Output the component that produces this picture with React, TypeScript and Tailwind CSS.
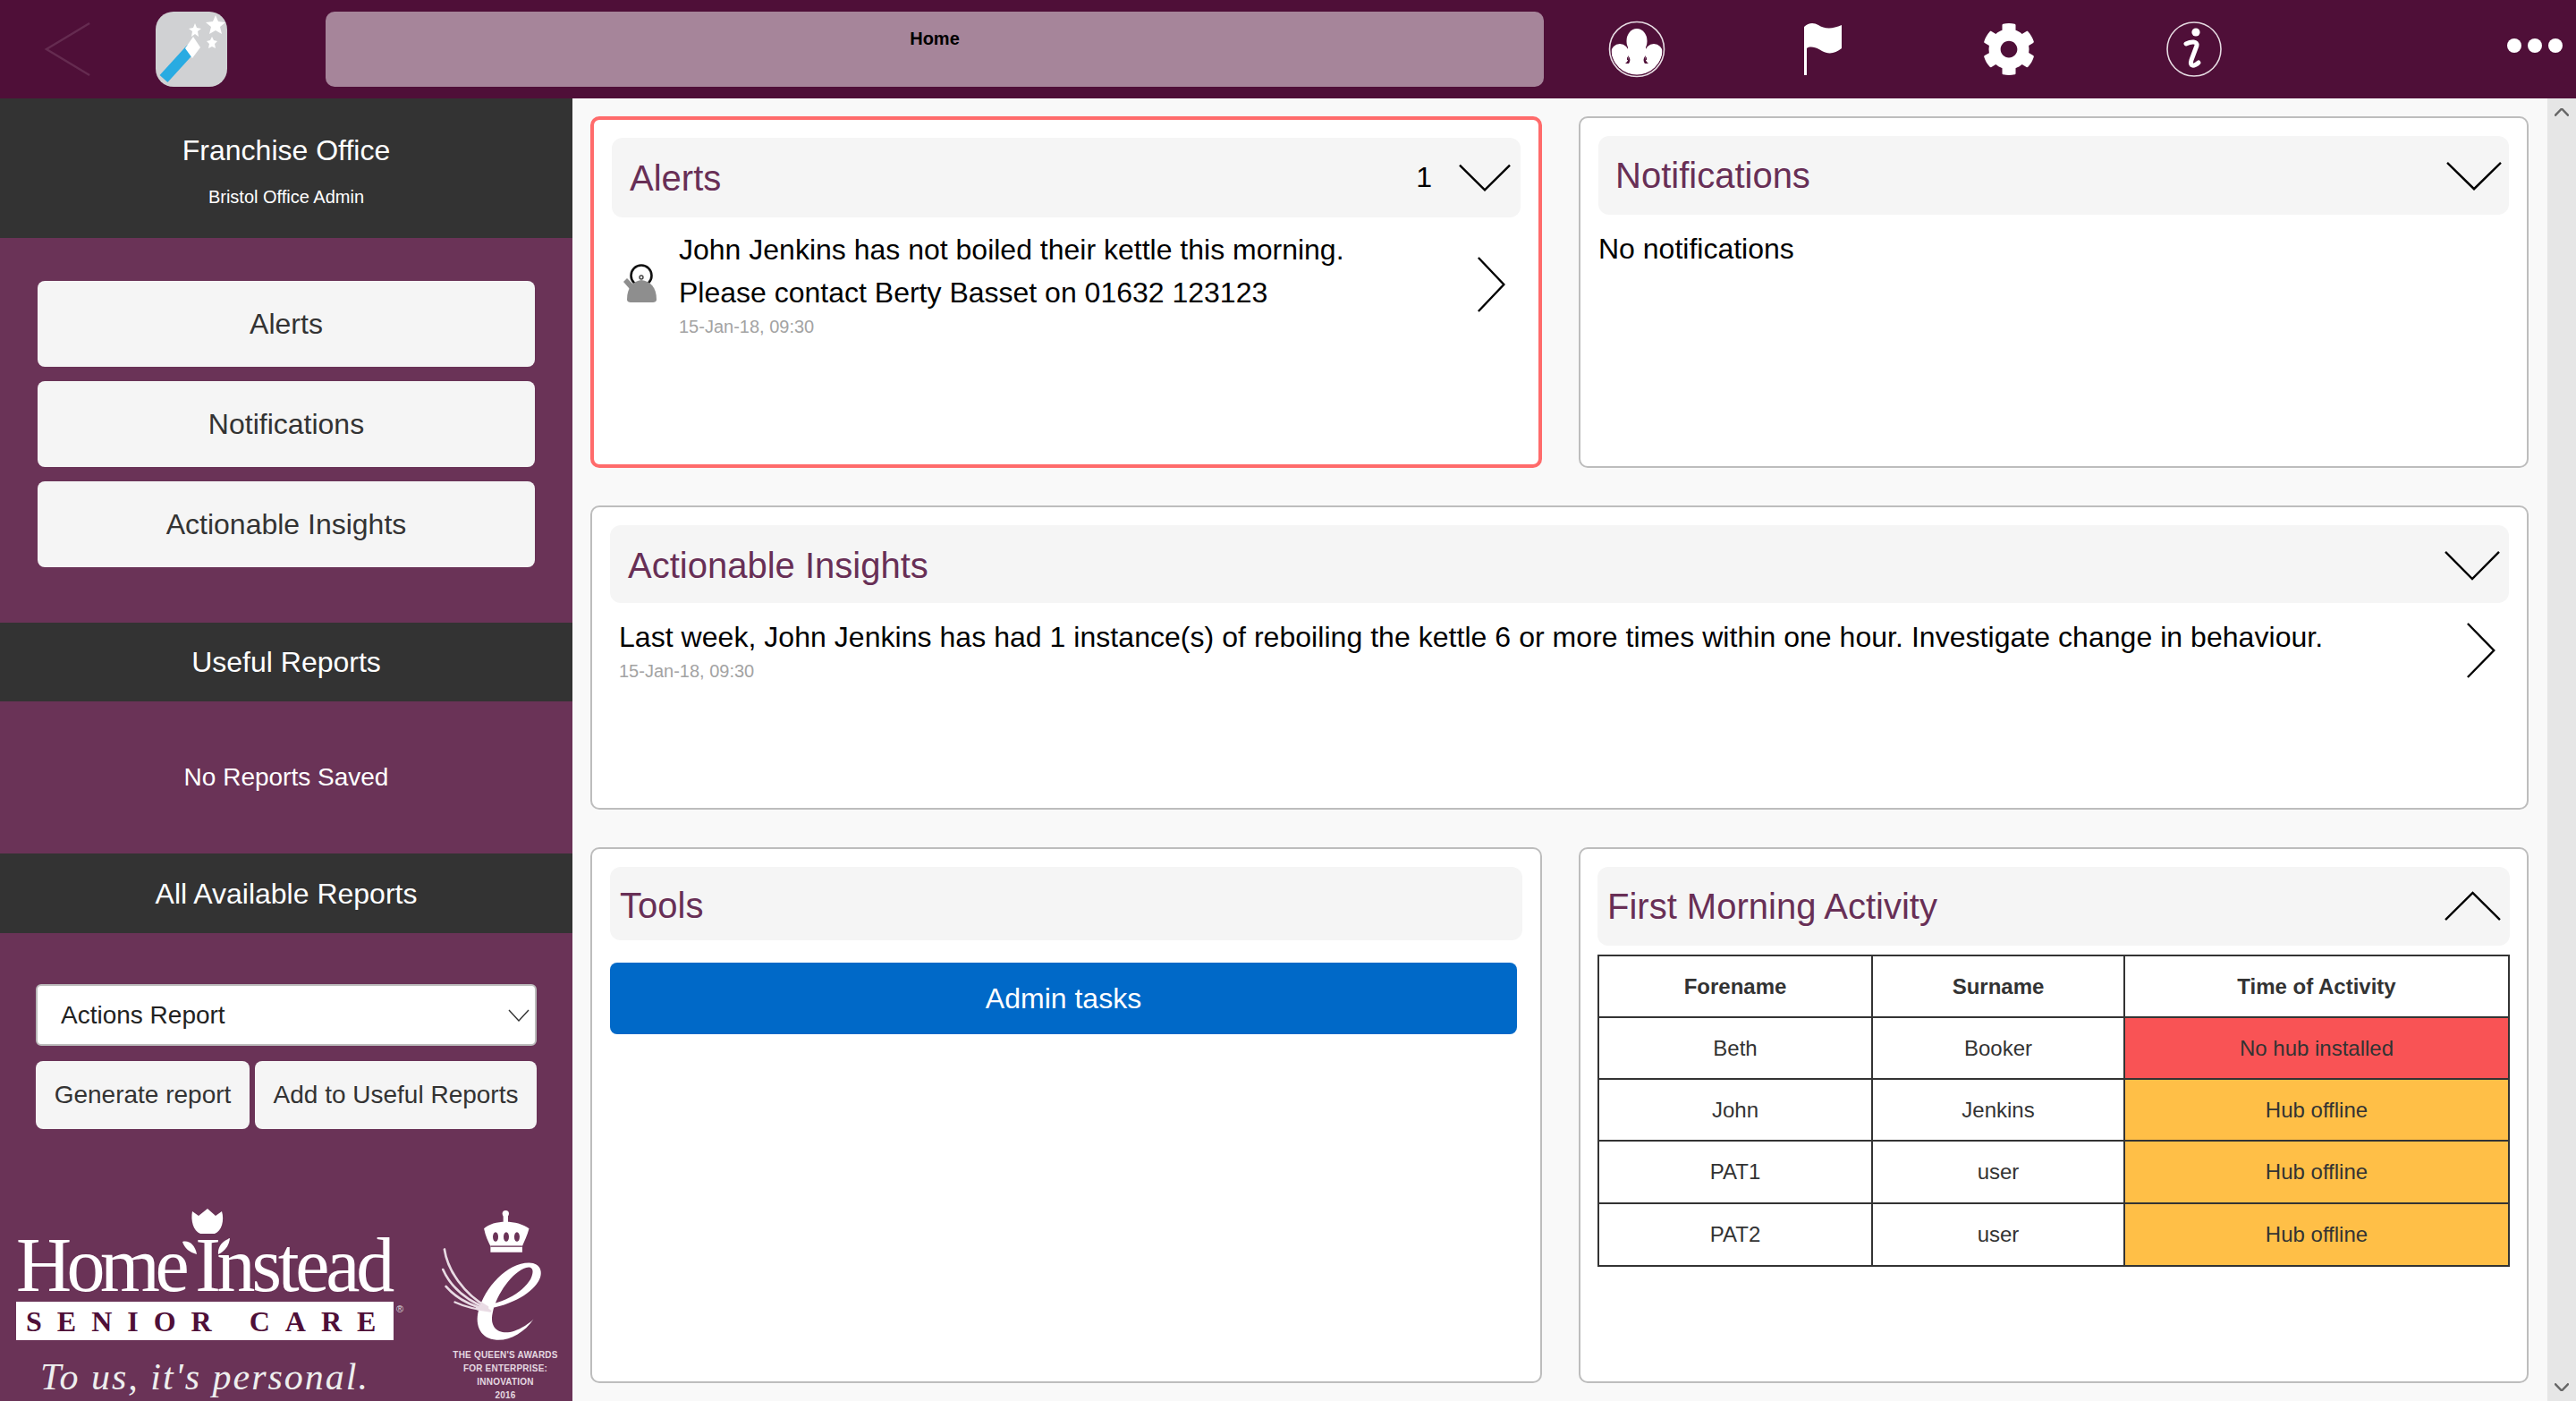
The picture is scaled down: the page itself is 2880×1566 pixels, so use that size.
import { FaCog } from "react-icons/fa";

const rows = [
  { forename: "John", surname: "Jenkins", status: "Hub offline", tone: "bg-[#ffbf47]", height: "h-[69px]" },
  { forename: "PAT1", surname: "user", status: "Hub offline", tone: "bg-[#ffbf47]", height: "h-[70px]" },
  { forename: "PAT2", surname: "user", status: "Hub offline", tone: "bg-[#ffbf47]", height: "h-[70px]" },
];

function Chevron({ dir, className }: { dir: "up" | "down" | "left" | "right"; className: string }) {
  const d = {
    up: "M1 35 L30 2 L59 35",
    down: "M1 2 L30 35 L59 2",
    left: "M35 1 L2 30 L35 59",
    right: "M2 1 L33 30 L2 59",
  }[dir];
  const box = dir === "up" || dir === "down" ? "0 0 60 37" : "0 0 37 60";
  return (
    <svg viewBox={box} className={className} preserveAspectRatio="none" fill="none">
      <path d={d} stroke="currentColor" strokeWidth="2.4" vectorEffect="non-scaling-stroke" />
    </svg>
  );
}

function Wand() {
  return (
    <div className="ml-[71px] h-[84px] w-[80px] shrink-0 rounded-[20px] bg-[#d0d1d3]">
      <svg viewBox="0 0 80 84" className="h-full w-full">
        <path d="M9 75 L40 41" stroke="#29abe2" strokeWidth="12" />
        <path d="M42 28 L50 40 L41 52 L33 41 Z" fill="#fff" />
        <path d="M67 4 L70 11 L78 12 L72 17 L74 25 L67 21 L60 25 L62 17 L56 12 L64 11 Z" fill="#fff" />
        <path d="M44 13 L46 18 L51 19 L47 22 L48 28 L44 25 L40 28 L41 22 L37 19 L42 18 Z" fill="#fff" />
        <path d="M63 28 L65 32 L69 33 L66 36 L67 41 L63 39 L59 41 L60 36 L57 33 L61 32 Z" fill="#fff" />
      </svg>
    </div>
  );
}

function PeopleIcon() {
  return (
    <svg viewBox="0 0 64 64" className="ml-[72px] h-[64px] w-[64px] shrink-0">
      <defs>
        <clipPath id="people-clip">
          <circle cx="32" cy="32" r="28.5" />
        </clipPath>
      </defs>
      <circle cx="32" cy="32" r="30.5" fill="none" stroke="#e6dbe2" strokeWidth="1.6" />
      <g clipPath="url(#people-clip)" fill="#fff">
        <ellipse cx="32" cy="23" rx="11.5" ry="14" />
        <circle cx="13" cy="36" r="10" />
        <circle cx="51" cy="36" r="10" />
        <rect x="0" y="44" width="64" height="20" />
        <rect x="22" y="28" width="20" height="20" />
        <rect x="4" y="38" width="17" height="10" />
        <rect x="43" y="38" width="17" height="10" />
      </g>
      <path d="M22 39 C23 43 22 46 19 48 L23 48 C25 45 25 42 22 39 Z" fill="#4f0f38" />
      <path d="M42 39 C41 43 42 46 45 48 L41 48 C39 45 39 42 42 39 Z" fill="#4f0f38" />
    </svg>
  );
}

function FlagIcon() {
  return (
    <svg viewBox="0 0 42 60" className="ml-[155px] h-[60px] w-[42px] shrink-0">
      <path
        d="M0 5 C5 0 11 0 16 3 C22 7 31 8 42 3 L42 29 C35 35 27 36 20 32 C14 28 7 26 3 29 L3 59 L0 59 Z"
        fill="#fff"
      />
    </svg>
  );
}

function InfoIcon() {
  return (
    <svg viewBox="0 0 62 62" className="ml-[146px] h-[62px] w-[62px] shrink-0">
      <circle cx="31" cy="31" r="30" fill="none" stroke="#e6dbe2" strokeWidth="1.6" />
      <circle cx="33" cy="12" r="4.6" fill="#fff" />
      <path
        d="M22 25 C28 22 35 22 34 27 L28 43 C26 50 30 51 36 46"
        fill="none"
        stroke="#fff"
        strokeWidth="5"
        strokeLinecap="round"
      />
    </svg>
  );
}

function KettleIcon() {
  return (
    <svg viewBox="0 0 40 44" className="h-[44px] w-[40px] shrink-0">
      <circle cx="21" cy="13" r="11.5" fill="none" stroke="#111" strokeWidth="2.6" />
      <circle cx="21" cy="15" r="2" fill="none" stroke="#444" strokeWidth="1.4" />
      <path d="M1 20 L5 16 L12 23 L8 28 Z" fill="#8e8e8e" />
      <path
        d="M5 40 C5 26 12 19 21 18 C31 19 38 26 38 40 C38 42 36 43 34 43 L9 43 C7 43 5 42 5 40 Z"
        fill="#8e8e8e"
      />
    </svg>
  );
}

function HomeInsteadLogo() {
  return (
    <div className="relative w-[470px] shrink-0 pl-[18px] pt-[26px]">
      <svg viewBox="0 0 60 54" className="absolute left-[202px] top-0 h-[54px] w-[60px]">
        <path
          d="M13 4 L20 9 L30 1 L39 9 L46 4 C49 14 46 26 38 29 L22 29 C14 26 11 14 13 4 Z"
          fill="#fff"
        />
        <path d="M2 38 C9 36 16 41 18 52 C10 50 4 45 2 38 Z" fill="#fff" />
        <path d="M55 34 C54 43 49 49 42 52 C41 43 47 37 55 34 Z" fill="#fff" />
      </svg>
      <div className="flex h-[76px] items-end font-['Liberation_Serif',serif] text-[86px] leading-[76px] text-white">
        <span className="tracking-[-5.5px]">Home</span>
        <span className="ml-[12px] tracking-[-4.2px]">Instead</span>
      </div>
      <div className="mt-[3px] flex h-[43px] w-[422px] items-center bg-white pl-[11px] font-['Liberation_Serif',serif] text-[32px] font-bold tracking-[17px] whitespace-pre text-[#4f0f38]">
        <span className="-mr-[17px]">SENIOR CARE</span>
      </div>
      <span className="absolute left-[443px] top-[108px] font-['Liberation_Sans',sans-serif] text-[11px] leading-none text-[#ddd]">
        ®
      </span>
      <div className="ml-[27px] mt-[19px] font-['Liberation_Serif',serif] text-[42px] leading-[44px] tracking-[2px] text-[#eee] italic">
        To us, it's personal.
      </div>
    </div>
  );
}

function QueensAward() {
  return (
    <div className="flex w-[160px] shrink-0 flex-col items-center">
      <svg viewBox="0 0 480 500" className="h-[166px] w-[160px]">
        <g fill="#fff">
          <circle cx="256" cy="50" r="11" />
          <rect x="248" y="55" width="16" height="30" />
          <path d="M183 100 C215 70 295 70 335 100 C328 125 318 145 312 160 L312 180 L205 180 L205 160 C198 145 188 125 183 100 Z" />
        </g>
        <g fill="#6a3357">
          <ellipse cx="222" cy="128" rx="9" ry="16" />
          <ellipse cx="258" cy="128" rx="9" ry="16" />
          <ellipse cx="294" cy="128" rx="9" ry="16" />
          <rect x="205" y="158" width="107" height="4" />
        </g>
        <path
          d="M350 405 C320 450 270 478 225 475 C175 472 150 430 165 375 C185 300 260 215 335 215 C375 215 385 250 365 280 C340 320 270 365 160 375 L155 365 C240 355 310 320 340 270 C355 240 345 225 325 232 C280 245 225 320 212 385 C200 440 240 460 285 445 C310 436 335 420 350 405 Z"
          fill="#fff"
        />
        <g fill="none" stroke="#e9dbe4" strokeLinecap="round">
          <path d="M50 170 C60 240 115 320 195 365" strokeWidth="8" />
          <path d="M45 238 C70 295 120 340 195 370" strokeWidth="8" />
          <path d="M55 295 C85 330 135 360 200 375" strokeWidth="8" />
          <path d="M85 348 C115 362 150 372 205 378" strokeWidth="7" />
        </g>
      </svg>
      <div className="ml-[10px] mt-[1px] whitespace-nowrap text-center text-[10px] font-bold leading-[15px] tracking-[0.2px] text-[#e4d8e0]">
        <div>THE QUEEN'S AWARDS</div>
        <div>FOR ENTERPRISE:</div>
        <div>INNOVATION</div>
        <div>2016</div>
      </div>
    </div>
  );
}

function SideButton({ label }: { label: string }) {
  return (
    <button className="h-[96px] w-[556px] rounded-[8px] bg-[#f5f5f5] text-[32px] text-[#333]">{label}</button>
  );
}

function Sidebar() {
  return (
    <aside className="h-[1456px] w-[640px] shrink-0 overflow-hidden bg-[#6a3357] text-white">
      <div className="h-[156px] bg-[#333] pt-[40px] text-center">
        <div className="text-[32px] leading-[36px]">Franchise Office</div>
        <div className="mt-[20px] text-[20px] leading-[28px]">Bristol Office Admin</div>
      </div>
      <div className="flex flex-col gap-[16px] pl-[42px] pt-[48px]">
        <SideButton label="Alerts" />
        <SideButton label="Notifications" />
        <SideButton label="Actionable Insights" />
      </div>
      <div className="mt-[62px] flex h-[88px] items-center justify-center bg-[#333] text-[32px]">Useful Reports</div>
      <div className="flex h-[170px] items-center justify-center text-[28px]">No Reports Saved</div>
      <div className="flex h-[89px] items-center justify-center bg-[#333] text-[32px]">All Available Reports</div>
      <div className="pl-[40px] pt-[57px]">
        <div className="relative h-[69px] w-[560px]">
          <select className="h-full w-full appearance-none rounded-[6px] border-2 border-[#bbb] bg-white pl-[26px] text-[28px] text-[#222]">
            <option>Actions Report</option>
          </select>
          <svg viewBox="0 0 24 14" className="pointer-events-none absolute right-[8px] top-[28px] h-[14px] w-[24px]" fill="none">
            <path d="M1 1 L12 13 L23 1" stroke="#333" strokeWidth="1.4" />
          </svg>
        </div>
        <div className="mt-[17px] flex gap-[6px]">
          <button className="h-[76px] w-[239px] rounded-[8px] bg-[#f5f5f5] text-[28px] text-[#333]">Generate report</button>
          <button className="h-[76px] w-[315px] rounded-[8px] bg-[#f5f5f5] text-[28px] text-[#333]">Add to Useful Reports</button>
        </div>
      </div>
      <div className="mt-[88px] flex">
        <HomeInsteadLogo />
        <div className="ml-[10px] -mt-[10px]">
          <QueensAward />
        </div>
      </div>
    </aside>
  );
}

function Card({ alert, className, children }: { alert?: boolean; className?: string; children: React.ReactNode }) {
  return (
    <section
      className={`rounded-[10px] bg-white ${alert ? "border-4 border-[#ff6b6b]" : "border-2 border-[#bdbdbd]"} ${className ?? "p-[20px]"}`}
    >
      {children}
    </section>
  );
}

function CardHeader({ title, height, inset, children }: { title: string; height: string; inset: string; children?: React.ReactNode }) {
  return (
    <div className={`flex items-center justify-between rounded-[12px] bg-[#f5f5f5] ${height} ${inset}`}>
      <h2 className="text-[40px] font-normal text-[#682f56]">{title}</h2>
      {children}
    </div>
  );
}

function ActivityTable() {
  return (
    <table className="mt-[10px] w-full table-fixed border-collapse border-2 border-[#333] text-center text-[24px] text-[#333]">
      <colgroup>
        <col className="w-[306px]" />
        <col className="w-[282px]" />
        <col />
      </colgroup>
      <thead>
        <tr className="h-[69px]">
          <th className="border-2 border-[#333] font-bold">Forename</th>
          <th className="border-2 border-[#333] font-bold">Surname</th>
          <th className="border-2 border-[#333] font-bold">Time of Activity</th>
        </tr>
      </thead>
      <tbody>
        <tr className="h-[69px]">
          <td className="border-2 border-[#333]">Beth</td>
          <td className="border-2 border-[#333]">Booker</td>
          <td className="border-2 border-[#333] bg-[#f95355]">No hub installed</td>
        </tr>
        {rows.map((row) => (
          <tr key={row.forename} className={row.height}>
            <td className="border-2 border-[#333]">{row.forename}</td>
            <td className="border-2 border-[#333]">{row.surname}</td>
            <td className={`border-2 border-[#333] ${row.tone}`}>{row.status}</td>
          </tr>
        ))}
      </tbody>
    </table>
  );
}

function Scrollbar() {
  return (
    <div className="flex h-[1456px] w-[32px] shrink-0 flex-col items-center justify-between bg-[#e6e6e6] py-[11px] text-[#666]">
      <Chevron dir="up" className="h-[9px] w-[16px]" />
      <Chevron dir="down" className="h-[9px] w-[16px]" />
    </div>
  );
}

export default function App() {
  return (
    <div className="h-[1566px] w-[2880px] overflow-hidden bg-[#f9f9f9] font-['Liberation_Sans',sans-serif]">
      <header className="flex h-[110px] items-center bg-[#4f0f38]">
        <Chevron dir="left" className="ml-[49px] h-[60px] w-[54px] shrink-0 text-[#652b50]" />
        <Wand />
        <div className="ml-[110px] flex h-[84px] w-[1362px] shrink-0 justify-center rounded-[10px] bg-[#a6859a] pt-[18px] text-[20px] font-bold leading-[24px] text-black">
          Home
        </div>
        <PeopleIcon />
        <FlagIcon />
        <FaCog className="ml-[157px] h-[60px] w-[60px] shrink-0 text-white" />
        <InfoIcon />
        <div className="ml-[319px] flex gap-[7px] pb-[8px]">
          <span className="h-[16px] w-[16px] rounded-full bg-white" />
          <span className="h-[16px] w-[16px] rounded-full bg-white" />
          <span className="h-[16px] w-[16px] rounded-full bg-white" />
        </div>
      </header>
      <div className="flex">
        <Sidebar />
        <main className="grid h-[1456px] w-[2208px] grid-cols-[1064px_1062px] grid-rows-[393px_340px_599px] gap-x-[41px] gap-y-[42px] pl-[20px] pt-[20px]">
          <Card alert>
            <CardHeader title="Alerts" height="h-[89px]" inset="pl-[20px] pr-[11px]">
              <div className="flex items-center gap-[30px] text-[32px]">
                <span className="-mt-[2px]">1</span>
                <Chevron dir="down" className="h-[31px] w-[58px]" />
              </div>
            </CardHeader>
            <div className="mt-[12px] flex items-center pl-[12px] pr-[15px]">
              <KettleIcon />
              <div className="ml-[23px] flex-1">
                <p className="text-[32px] leading-[48px] text-black">John Jenkins has not boiled their kettle this morning.</p>
                <p className="text-[32px] leading-[48px] text-black">Please contact Berty Basset on 01632 123123</p>
                <p className="text-[20px] leading-[28px] text-[#a3a3a3]">15-Jan-18, 09:30</p>
              </div>
              <Chevron dir="right" className="mt-[2px] h-[62px] w-[34px] shrink-0" />
            </div>
          </Card>
          <Card>
            <CardHeader title="Notifications" height="h-[88px]" inset="pl-[19px] pr-[8px]">
              <Chevron dir="down" className="h-[33px] w-[62px]" />
            </CardHeader>
            <p className="mt-[18px] text-[32px] leading-[40px] text-black">No notifications</p>
          </Card>
          <Card className="col-span-2 p-[20px]">
            <CardHeader title="Actionable Insights" height="h-[87px]" inset="pl-[20px] pr-[10px] pt-[2px]">
              <Chevron dir="down" className="h-[34px] w-[62px]" />
            </CardHeader>
            <div className="mt-[14px] flex justify-between pl-[10px] pr-[13px]">
              <div>
                <p className="text-[32px] leading-[48px] tracking-[0.04px] text-black">
                  Last week, John Jenkins has had 1 instance(s) of reboiling the kettle 6 or more times within one hour. Investigate change in behaviour.
                </p>
                <p className="text-[20px] leading-[28px] text-[#a3a3a3]">15-Jan-18, 09:30</p>
              </div>
              <Chevron dir="right" className="mt-[8px] h-[62px] w-[35px] shrink-0" />
            </div>
          </Card>
          <Card>
            <CardHeader title="Tools" height="h-[82px]" inset="pl-[11px] pt-[3px]" />
            <button className="mt-[25px] h-[80px] w-[1014px] rounded-[8px] bg-[#0069c8] text-[32px] text-white">Admin tasks</button>
          </Card>
          <Card className="px-[19px] py-[20px]">
            <CardHeader title="First Morning Activity" height="h-[88px]" inset="pl-[11px] pr-[10px]">
              <Chevron dir="up" className="h-[34px] w-[63px]" />
            </CardHeader>
            <ActivityTable />
          </Card>
        </main>
        <Scrollbar />
      </div>
    </div>
  );
}
